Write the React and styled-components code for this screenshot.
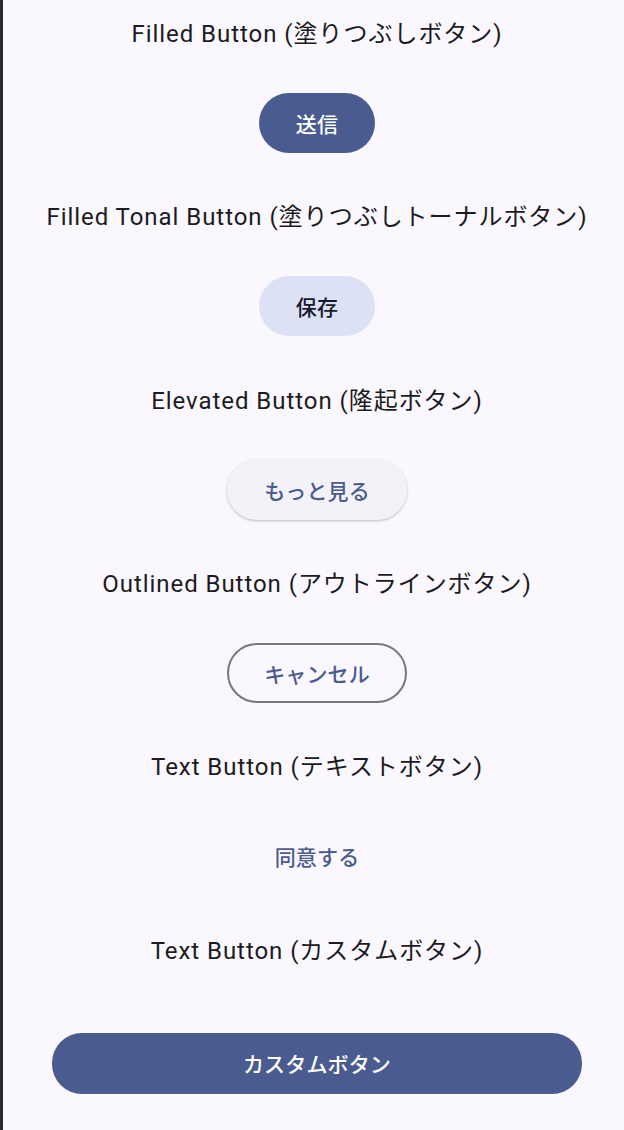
import React from "react";
import styled, { createGlobalStyle } from "styled-components";

const GlobalStyle = createGlobalStyle`
  html, body {
    margin: 0;
    padding: 0;
    background: #faf8fe;
  }
  body {
    font-family: Roboto, "Noto Sans CJK JP", sans-serif;
    -webkit-font-smoothing: antialiased;
  }
`;

const Screen = styled.div`
  display: flex;
  min-height: 1130px;
  background: #faf8fe;
`;

const Edge = styled.div`
  width: 3px;
  flex-shrink: 0;
  background: #2b2b2e;
`;

const Content = styled.main`
  flex: 1;
  display: flex;
  flex-direction: column;
  align-items: center;
  padding: 16px 0 0 7px;
`;

const Section = styled.section`
  display: flex;
  flex-direction: column;
  align-items: center;
  width: 100%;
  height: 183.33px;
`;

const Label = styled.p`
  margin: 0 0 41px;
  height: 36px;
  line-height: 36px;
  font-size: 24px;
  letter-spacing: 0.95px;
  color: #1c1b21;
  white-space: nowrap;
`;

const Button = styled.button`
  box-sizing: border-box;
  height: 60px;
  padding: 0 37px;
  border-radius: 30px;
  border: none;
  font-family: inherit;
  font-size: 21px;
  font-weight: 500;
  letter-spacing: 0.15px;
  cursor: pointer;
  background: ${(p) => p.$bg || "transparent"};
  color: ${(p) => p.$fg};
  ${(p) => p.$outlined && "border: 2px solid #77777e; padding: 0 35px;"}
  ${(p) =>
    p.$raised &&
    "box-shadow: 0 1px 2px rgba(0,0,0,0.16), 0 1px 3px 1px rgba(0,0,0,0.06);"}
`;

const WideButton = styled(Button)`
  width: 530px;
  height: 61px;
  margin-top: 23px;
`;

const items = [
  { label: "Filled Button (塗りつぶしボタン)", text: "送信", bg: "#4a5b8f", fg: "#ffffff" },
  { label: "Filled Tonal Button (塗りつぶしトーナルボタン)", text: "保存", bg: "#dde1f6", fg: "#171b2c" },
  { label: "Elevated Button (隆起ボタン)", text: "もっと見る", bg: "#f3f2f8", fg: "#4a5b8f", raised: true },
  { label: "Outlined Button (アウトラインボタン)", text: "キャンセル", fg: "#4a5b8f", outlined: true },
  { label: "Text Button (テキストボタン)", text: "同意する", fg: "#4a5b8f" },
];

export default function App() {
  return (
    <>
      <GlobalStyle />
      <Screen>
        <Edge />
        <Content>
          {items.map((it) => (
            <Section key={it.label}>
              <Label>{it.label}</Label>
              <Button $bg={it.bg} $fg={it.fg} $raised={it.raised} $outlined={it.outlined}>
                {it.text}
              </Button>
            </Section>
          ))}
          <Section>
            <Label>Text Button (カスタムボタン)</Label>
            <WideButton $bg="#4a5b8f" $fg="#ffffff">
              カスタムボタン
            </WideButton>
          </Section>
        </Content>
      </Screen>
    </>
  );
}
